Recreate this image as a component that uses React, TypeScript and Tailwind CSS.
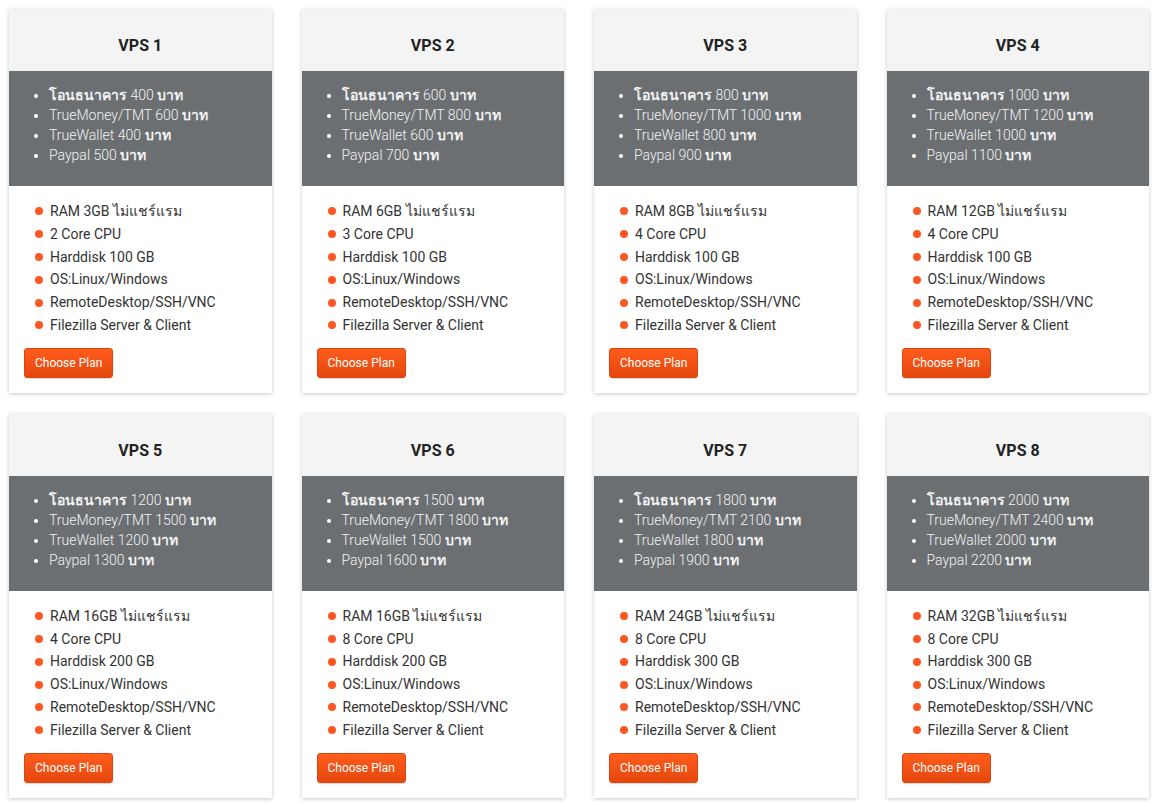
const plans = [
  { n: 1, bank: 400, tmt: 600, wallet: 400, paypal: 500, ram: 3, cpu: 2, disk: 100 },
  { n: 2, bank: 600, tmt: 800, wallet: 600, paypal: 700, ram: 6, cpu: 3, disk: 100 },
  { n: 3, bank: 800, tmt: 1000, wallet: 800, paypal: 900, ram: 8, cpu: 4, disk: 100 },
  { n: 4, bank: 1000, tmt: 1200, wallet: 1000, paypal: 1100, ram: 12, cpu: 4, disk: 100 },
  { n: 5, bank: 1200, tmt: 1500, wallet: 1200, paypal: 1300, ram: 16, cpu: 4, disk: 200 },
  { n: 6, bank: 1500, tmt: 1800, wallet: 1500, paypal: 1600, ram: 16, cpu: 8, disk: 200 },
  { n: 7, bank: 1800, tmt: 2100, wallet: 1800, paypal: 1900, ram: 24, cpu: 8, disk: 300 },
  { n: 8, bank: 2000, tmt: 2400, wallet: 2000, paypal: 2200, ram: 32, cpu: 8, disk: 300 },
];

type Plan = (typeof plans)[number];

function PlanCard({ p }: { p: Plan }) {
  const features = [
    `RAM ${p.ram}GB ไม่แชร์แรม`,
    `${p.cpu} Core CPU`,
    `Harddisk ${p.disk} GB`,
    "OS:Linux/Windows",
    "RemoteDesktop/SSH/VNC",
    "Filezilla Server & Client",
  ];

  return (
    <div className="bg-white shadow-[0_1px_4px_rgba(0,0,0,0.22)]">
      <div className="h-[62px] bg-[#f4f4f4] pt-[27px] text-center">
        <h3 className="text-[16px] leading-[19px] font-bold text-[#222]">VPS {p.n}</h3>
      </div>

      <div className="bg-[#6b6f72] pt-[14px] pb-[21px] text-[14px] leading-[20px] text-[#f3f3f3]">
        <ul className="list-disc pl-[40px] marker:text-white">
          <li>
            <b>โอนธนาคาร</b> <span className="font-light">{p.bank}</span> <b>บาท</b>
          </li>
          <li>
            <span className="font-light">TrueMoney/TMT {p.tmt}</span> <b>บาท</b>
          </li>
          <li>
            <span className="font-light">TrueWallet {p.wallet}</span> <b>บาท</b>
          </li>
          <li>
            <span className="font-light">Paypal {p.paypal}</span> <b>บาท</b>
          </li>
        </ul>
      </div>

      <div className="pt-[14px] pb-[15px] pl-[15px]">
        <ul className="text-[14px] leading-[22.8px] text-[#333]">
          {features.map((f) => (
            <li key={f} className="flex items-center pl-[11px]">
              <span className="w-[8px] h-[8px] rounded-full bg-[#ff5722] mr-[7px] shrink-0" />
              {f}
            </li>
          ))}
        </ul>
        <button className="mt-[11px] h-[30px] px-[10px] rounded-[3px] border border-[#d9460f] bg-gradient-to-b from-[#ff5c1c] to-[#e5470d] text-white text-[12px] shadow-[0_1px_1px_rgba(0,0,0,0.15)]">
          Choose Plan
        </button>
      </div>
    </div>
  );
}

export default function App() {
  return (
    <div
      className="w-[1158px] min-h-[804px] bg-white px-[9px] pt-[9px]"
      style={{ fontFamily: "Roboto, 'Noto Sans', 'DejaVu Sans', sans-serif" }}
    >
      <div className="grid grid-cols-4 gap-x-[30px] gap-y-[21px]">
        {plans.map((p) => (
          <PlanCard key={p.n} p={p} />
        ))}
      </div>
    </div>
  );
}
